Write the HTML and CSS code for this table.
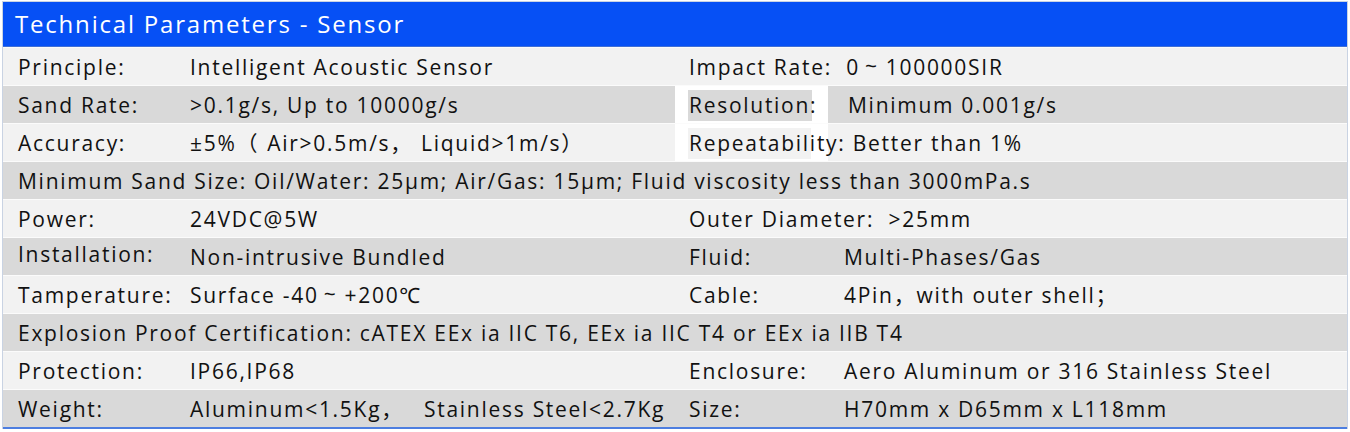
FILE: index.html
```html
<!DOCTYPE html>
<html>
<head>
<meta charset="utf-8">
<link rel="stylesheet" href="styles.css">
</head>
<body>
<div class="sheet">
  <div class="title">Technical Parameters - Sensor</div>
  <div class="row light">
    <div class="half left"><span class="lbl">Principle:</span><span>Intelligent Acoustic Sensor</span></div>
    <div class="half right"><span>Impact Rate:&nbsp; 0<span class="tl">~</span>100000SIR</span></div>
  </div>
  <div class="row dark">
    <div class="half left"><span class="lbl">Sand Rate:</span><span>&gt;0.1g/s, Up to 10000g/s</span></div>
    <div class="half right gap-dark"><span class="rlbl res">Resolution:</span><span>Minimum 0.001g/s</span></div>
  </div>
  <div class="row light">
    <div class="half left"><span class="lbl">Accuracy:</span><span>±5%<span class="fw">（</span>Air&gt;0.5m/s<span class="fw">，</span>Liquid&gt;1m/s<span class="fw">）</span></span></div>
    <div class="half right gap-light"><span>Repeatability: Better than 1%</span></div>
  </div>
  <div class="row dark full">Minimum Sand Size: Oil/Water: 25μm; Air/Gas: 15μm; Fluid viscosity less than 3000mPa.s</div>
  <div class="row light">
    <div class="half left"><span class="lbl">Power:</span><span>24VDC@5W</span></div>
    <div class="half right"><span>Outer Diameter:&nbsp; &gt;25mm</span></div>
  </div>
  <div class="row dark">
    <div class="half left"><span class="lbl up">Installation:</span><span>Non-intrusive Bundled</span></div>
    <div class="half right"><span class="rlbl">Fluid:</span><span>Multi-Phases/Gas</span></div>
  </div>
  <div class="row light">
    <div class="half left"><span class="lbl">Tamperature:</span><span>Surface -40<span class="tl">~</span>+200℃</span></div>
    <div class="half right"><span class="rlbl">Cable:</span><span>4Pin，with outer shell；</span></div>
  </div>
  <div class="row dark full">Explosion Proof Certification: cATEX EEx ia IIC T6, EEx ia IIC T4 or EEx ia IIB T4</div>
  <div class="row light">
    <div class="half left"><span class="lbl">Protection:</span><span>IP66,IP68</span></div>
    <div class="half right"><span class="rlbl">Enclosure:</span><span>Aero Aluminum or 316 Stainless Steel</span></div>
  </div>
  <div class="row dark last">
    <div class="half left"><span class="lbl">Weight:</span><span>Aluminum&lt;1.5Kg<span class="fw wide">，</span>Stainless Steel&lt;2.7Kg</span></div>
    <div class="half right"><span class="rlbl">Size:</span><span>H70mm x D65mm x L118mm</span></div>
  </div>
</div>
</body>
</html>
```

FILE: styles.css
```css
* { box-sizing: border-box; }
html, body { margin: 0; padding: 0; background: #ffffff; }
body {
  font-family: "Open Sans", "Noto Sans", "Noto Sans CJK SC", sans-serif;
  color: #111111;
}
.sheet {
  width: 1346px;
  margin: 1px 0 0 2px;
  border-left: 1px solid #c9d3e3;
  border-right: 1px solid #c9d3e3;
  border-top: 1px solid #c9d3e3;
}
.title {
  height: 45px;
  background: #0650f5;
  color: #ffffff;
  font-size: 24px;
  letter-spacing: 1.8px;
  line-height: 44px;
  padding-left: 12px;
  border-bottom: 1px solid #3f6fd6;
}
.row {
  height: 38px;
  display: flex;
  align-items: stretch;
  font-size: 21px;
  letter-spacing: 1.72px;
  line-height: 39px;
  border-top: 1px solid #fbfbfb;
}
.row.light { background: #f2f2f2; }
.row.dark { background: #d9d9d9; }
.row.full { padding-left: 15px; white-space: nowrap; }
.row.last { border-bottom: 2px solid #4d7ee0; height: 40px; }
.half { display: flex; white-space: nowrap; }
.left { width: 672px; padding-left: 15px; }
.right { flex: 1; padding-left: 14px; }
.lbl { width: 172px; flex: none; }
.lbl.up { position: relative; top: -3px; }
.rlbl { width: 155px; flex: none; }
.rlbl.res { width: 159px; }
.tl { display: inline-block; margin: 0 7px 0 5px; transform: translateY(-1px); }
.fw { margin-right: 8px; }
.fw.wide { margin-right: 20px; }
.gap-dark {
  background:
    linear-gradient(#d9d9d9, #d9d9d9) 13px 4px / 124px 31px no-repeat,
    linear-gradient(to right, #ffffff 153px, #d9d9d9 153px);
}
.gap-light {
  background:
    linear-gradient(#f2f2f2, #f2f2f2) 13px 4px / 123px 31px no-repeat,
    linear-gradient(to right, #ffffff 153px, #f2f2f2 153px);
}
```
